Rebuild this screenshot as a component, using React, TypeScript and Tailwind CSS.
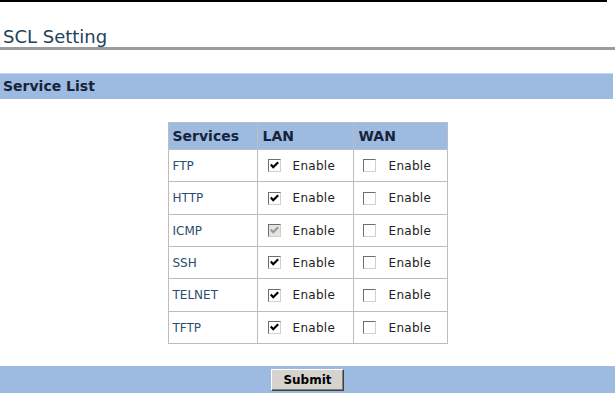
import React from "react";

type Row = { name: string; h: string; lan: "on" | "dis"; };

const rows: Row[] = [
  { name: "FTP", h: "h-[32px]", lan: "on" },
  { name: "HTTP", h: "h-[33px]", lan: "on" },
  { name: "ICMP", h: "h-[32px]", lan: "dis" },
  { name: "SSH", h: "h-[32px]", lan: "on" },
  { name: "TELNET", h: "h-[33px]", lan: "on" },
  { name: "TFTP", h: "h-[32px]", lan: "on" },
];

function Box({ state }: { state: "on" | "off" | "dis" }) {
  const bg = state === "dis" ? "bg-[#e6e4de]" : "bg-white";
  return (
    <div
      className={`relative w-[13px] h-[13px] shrink-0 border border-t-[#6e6e6e] border-l-[#6e6e6e] border-b-[#d0d0d0] border-r-[#d0d0d0] ${bg}`}
    >
      {state !== "off" && (
        <svg width="11" height="11" viewBox="0 0 11 11" className="absolute left-0 top-0">
          <path
            d="M1.8 4.6 L4.2 7.2 L9.2 2.2"
            fill="none"
            stroke={state === "dis" ? "#9a9a9a" : "#000"}
            strokeWidth="2.2"
          />
        </svg>
      )}
    </div>
  );
}

export default function App() {
  const font = { fontFamily: '"DejaVu Sans", Verdana, sans-serif' };
  return (
    <div className="w-[615px] h-[393px] bg-white overflow-hidden" style={font}>
      <div className="h-[2px] w-[607px] bg-black" />
      <div className="mt-[24px] pl-[3px] text-[18px] leading-[21px] text-[#243f5a]">SCL Setting</div>
      <div className="h-[3px] w-full bg-[#9c9c9c]" />
      <div className="mt-[23px] h-[26px] w-[613px] bg-[#9dbbe0] border-t border-[#c4d6ec] flex items-center pl-[3px] text-[14px] font-bold text-[#16233a]">
        Service List
      </div>
      <div className="mt-[23px] flex justify-center">
        <table className="border-collapse border border-[#bdbdbd] text-[12px]">
          <thead>
            <tr className="h-[27px] bg-[#9dbbe0] text-[14px] font-bold text-[#16233a]">
              <th className="w-[89px] border border-[#bdbdbd] text-left pl-[4px] font-bold">Services</th>
              <th className="w-[96px] border border-[#bdbdbd] text-left pl-[5px] font-bold">LAN</th>
              <th className="w-[94px] border border-[#bdbdbd] text-left pl-[5px] font-bold">WAN</th>
            </tr>
          </thead>
          <tbody>
            {rows.map((r) => (
              <tr key={r.name} className={r.h}>
                <td className="border border-[#bdbdbd] pl-[4px] text-[12px] text-[#2c4d70]">{r.name}</td>
                <td className="border border-[#bdbdbd] pl-[10px]">
                  <div className="flex items-center gap-[12px] text-[#222] tracking-[0.3px]">
                    <Box state={r.lan} />
                    <span>Enable</span>
                  </div>
                </td>
                <td className="border border-[#bdbdbd] pl-[9px]">
                  <div className="flex items-center gap-[13px] text-[#222] tracking-[0.3px]">
                    <Box state="off" />
                    <span>Enable</span>
                  </div>
                </td>
              </tr>
            ))}
          </tbody>
        </table>
      </div>
      <div className="mt-[22px] h-[28px] w-full bg-[#9dbbe0] flex justify-center pt-[3px]">
        <button className="w-[73px] h-[22px] bg-[#d6d3ce] border border-t-white border-l-white border-b-[#404040] border-r-[#404040] shadow-[inset_-1px_-1px_0_#808080] text-[12px] font-bold text-black flex items-center justify-center">
          Submit
        </button>
      </div>
    </div>
  );
}
